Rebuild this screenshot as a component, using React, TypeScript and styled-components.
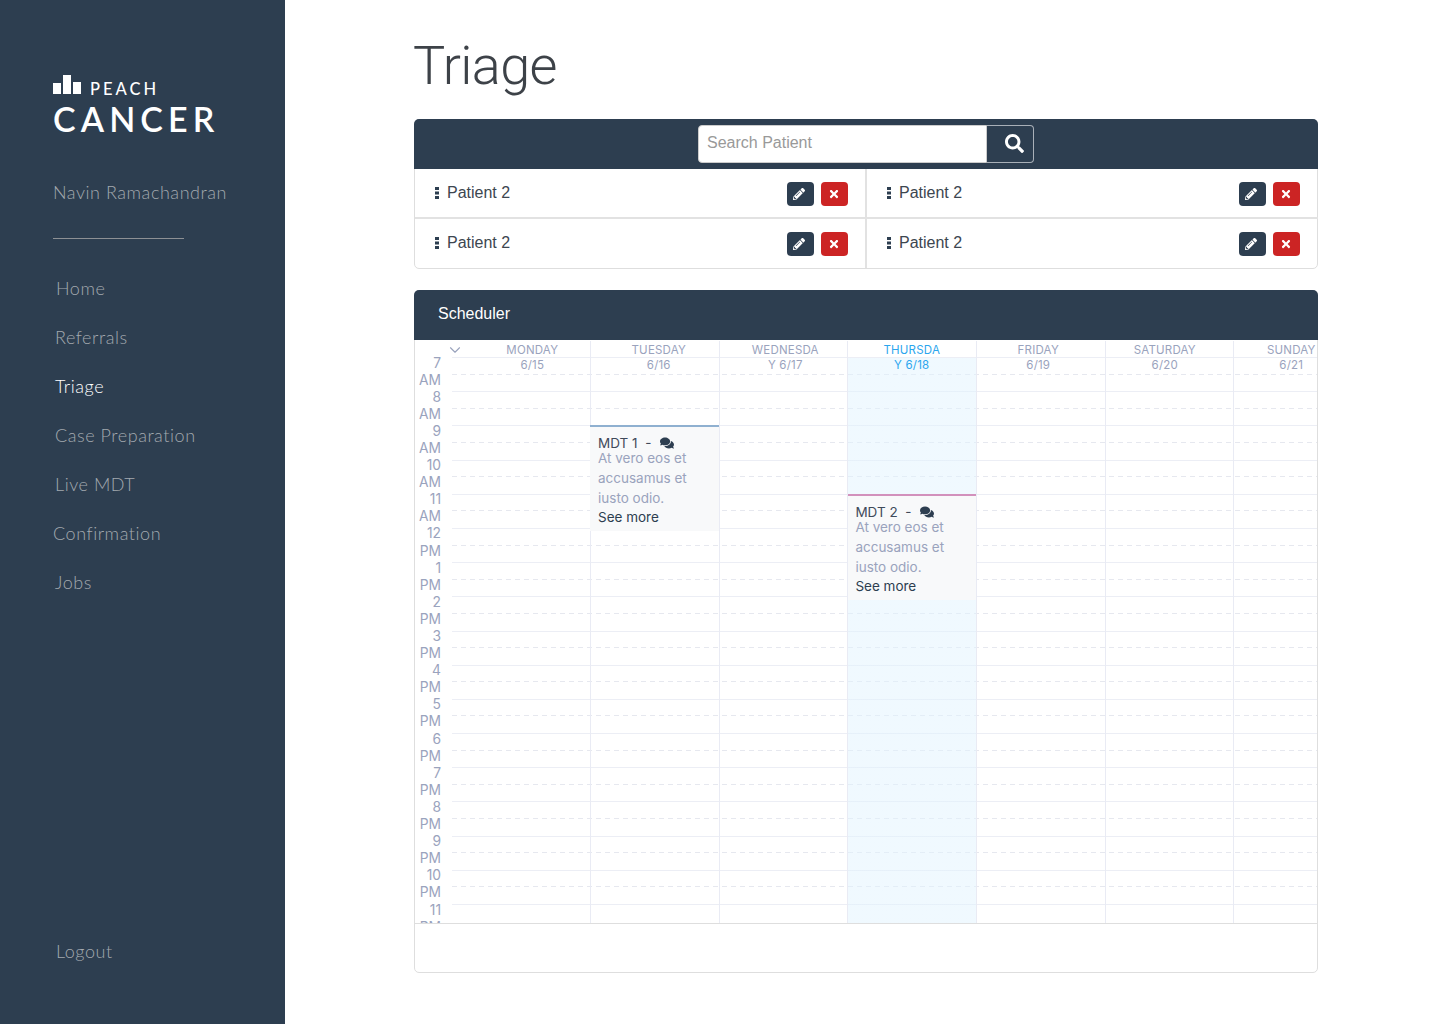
import React from 'react';
import styled, { createGlobalStyle } from 'styled-components';
import { FaSearch, FaPencilAlt, FaTimes, FaComments } from 'react-icons/fa';
import { FiChevronDown } from 'react-icons/fi';

const navy = '#2d3e50';
const HOUR = 34.2;

const GlobalStyle = createGlobalStyle`
  * { box-sizing: border-box; }
  html, body { margin: 0; padding: 0; background: #fff; }
  body { font-family: "Liberation Sans", Arial, sans-serif; color: #3c4650; }
`;

const Page = styled.div`
  display: flex;
  height: 1024px;
  overflow: hidden;
`;

const Sidebar = styled.aside`
  flex: 0 0 285px;
  display: flex;
  flex-direction: column;
  padding: 75px 0 48px 53px;
  background: ${navy};
  font-family: Lato, sans-serif;
`;

const LogoTop = styled.div`
  display: flex;
  align-items: flex-end;
  height: 20px;
`;

const LogoMark = styled.svg`
  width: 28px;
  height: 20px;
  display: block;
`;

const LogoPeach = styled.span`
  margin-left: 9px;
  color: #fff;
  font-size: 16.5px;
  line-height: 12px;
  font-weight: 500;
  letter-spacing: 3px;
`;

const LogoCancer = styled.div`
  margin-top: 5px;
  color: #fff;
  font-size: 34px;
  line-height: 38px;
  font-weight: 600;
  letter-spacing: 5.1px;
`;

const UserName = styled.div`
  margin-top: 42px;
  color: #a3a9af;
  font-size: 18px;
  line-height: 24px;
  font-weight: 300;
  letter-spacing: 0.55px;
`;

const Divider = styled.hr`
  width: 131px;
  height: 1px;
  margin: 34px 0 25px;
  border: 0;
  background: #8d9094;
`;

const Nav = styled.nav`
  display: flex;
  flex-direction: column;
`;

const NavItem = styled.a<{ $active?: boolean; $nudge?: number }>`
  height: 49px;
  padding-left: ${(p) => p.$nudge ?? 2}px;
  color: ${(p) => (p.$active ? '#fff' : '#a3a9af')};
  font-size: 18px;
  line-height: 49px;
  font-weight: 300;
  letter-spacing: 0.55px;
`;

const Logout = styled(NavItem)`
  margin-top: auto;
`;

const Main = styled.main`
  flex: 0 0 1155px;
  padding: 0 122px 0 129px;
`;

const Title = styled.h1`
  margin: 0 0 0 -1px;
  height: 119px;
  padding-top: 31px;
  color: #3d4248;
  font-family: Roboto, sans-serif;
  font-size: 54px;
  line-height: 70px;
  font-weight: 300;
  letter-spacing: -0.6px;
`;

const Panel = styled.section<{ $gap?: number }>`
  margin-top: ${(p) => p.$gap ?? 0}px;
  border: 1px solid #dedede;
  border-radius: 5px;
`;

const PanelHead = styled.header`
  height: 50px;
  margin: -1px -1px 0;
  border-radius: 5px 5px 0 0;
  background: ${navy};
  color: #fff;
  font-size: 16px;
`;

const SearchHead = styled(PanelHead)`
  display: flex;
  justify-content: center;
  padding: 6px 0;
`;

const SchedulerHead = styled(PanelHead)`
  padding: 14px 24px;
  line-height: 20px;
`;

const SearchInput = styled.input`
  width: 289px;
  height: 38px;
  padding: 0 8px 2px;
  border: 1px solid #ccc;
  border-radius: 4px 0 0 4px;
  background: #fff;
  font: 16px "Liberation Sans", Arial, sans-serif;
  outline: none;
  &::placeholder { color: #999; opacity: 1; }
`;

const SearchButton = styled.button`
  display: flex;
  align-items: center;
  justify-content: center;
  width: 47px;
  height: 38px;
  padding: 0 0 2px 9px;
  border: 1px solid #a9b0b8;
  border-left: 0;
  border-radius: 0 4px 4px 0;
  background: ${navy};
  color: #fff;
  font-size: 19px;
`;

const PatientGrid = styled.div`
  display: grid;
  grid-template-columns: 452px 451px;
  grid-template-rows: 50px 49px;
  margin-right: -1px;
`;

const PatientCell = styled.div<{ $lastRow?: boolean; $left?: boolean }>`
  display: flex;
  align-items: center;
  padding: 0 ${(p) => (p.$left ? 17 : 18)}px 0 20px;
  ${(p) => (p.$lastRow ? '' : 'border-bottom: 2px solid #e2e2e2;')}
  ${(p) => (p.$left ? 'border-right: 2px solid #e2e2e2;' : '')}
`;

const DragHandle = styled.svg`
  flex: none;
  width: 4px;
  height: 12px;
  margin: -1px 8px 0 0;
  fill: ${navy};
`;

const PatientName = styled.span<{ $lastRow?: boolean }>`
  flex: 1;
  font-size: 16px;
  line-height: 20px;
  position: relative;
  top: ${(p) => (p.$lastRow ? -1 : 0)}px;
`;

const IconButton = styled.button<{ $danger?: boolean; $lastRow?: boolean }>`
  display: flex;
  align-items: center;
  justify-content: center;
  width: 27px;
  height: 24px;
  margin: ${(p) => (p.$lastRow ? 1 : 2)}px 0 0 7px;
  padding: 0 ${(p) => (p.$danger ? 2 : 3)}px 1px 0;
  border: 0;
  border-radius: 4px;
  background: ${(p) => (p.$danger ? '#cc2424' : navy)};
  color: #fff;
  font-size: 12px;
`;

const Calendar = styled.div`
  display: flex;
  height: 583px;
  margin-top: 1px;
  overflow: hidden;
  border-bottom: 1px solid #dedede;
  font-family: Inter, sans-serif;
`;

const TimeColumn = styled.div`
  flex: 0 0 37px;
  padding: 13.5px 11px 0 0;
`;

const TimeLabel = styled.div`
  height: ${HOUR}px;
  color: #9aa3bd;
  font-size: 13.8px;
  line-height: ${HOUR / 2}px;
  text-align: right;
`;

const GridArea = styled.div`
  position: relative;
  flex: 1;
  min-width: 0;
  padding-top: 16px;
`;

const HourRow = styled.div`
  height: ${HOUR}px;
  border-top: 1px solid #eceef5;
`;

const HalfLine = styled.div`
  height: ${HOUR / 2 - 0.5}px;
  background: repeating-linear-gradient(90deg, #e6e8ef 0 5px, transparent 5px 9px) left bottom / 100% 1px no-repeat;
`;

const ColumnLayer = styled.div`
  position: absolute;
  inset: 0;
  display: flex;
`;

const DayColumn = styled.div<{ $today?: boolean; $first?: boolean; $last?: boolean }>`
  position: relative;
  flex: ${(p) => (p.$last ? '1' : p.$first ? '0 0 138px' : '0 0 128.7px')};
  ${(p) => (p.$first ? '' : 'border-left: 1px solid #e9ebf4;')}
  ${(p) => (p.$today ? 'background: linear-gradient(transparent 17px, rgba(225, 243, 254, 0.5) 17px);' : '')}
`;

const EventCard = styled.div<{ $color: string; $top: number }>`
  position: absolute;
  top: ${(p) => p.$top}px;
  left: -0.6px;
  right: -1px;
  height: 106px;
  padding: 8px 8px 0 7.6px;
  border-top: 2px solid ${(p) => p.$color};
  background: #f8f9fa;
  font-size: 13.5px;
`;

const EventTitle = styled.div`
  display: flex;
  align-items: center;
  height: 13px;
  margin-top: 1px;
  color: #3f4a5a;
`;

const EventIcon = styled.span`
  display: flex;
  margin-left: 5px;
  color: ${navy};
  font-size: 14px;
`;

const EventBody = styled.div`
  margin-top: -1px;
  color: #9aa3bd;
  line-height: 20px;
`;

const SeeMore = styled.div`
  color: ${navy};
  line-height: 18px;
`;

const HeaderRow = styled.div`
  position: absolute;
  top: 0;
  left: -3px;
  right: 0;
  display: flex;
  overflow: hidden;
  padding-top: 1.5px;
`;

const Chevron = styled.span`
  flex: 0 0 20px;
  display: flex;
  height: 15px;
  color: #9aa3bd;
  font-size: 18px;
  svg { flex: none; margin: -2px 0 0 -3px; stroke-width: 1.5; }
`;

const DayHead = styled.div<{ $today?: boolean }>`
  flex: 0 0 126.5px;
  display: flex;
  justify-content: center;
  color: ${(p) => (p.$today ? '#2ba6ee' : '#9aa3bd')};
  font-size: 11.5px;
  line-height: 15px;
  letter-spacing: 0.2px;
  text-align: center;
  text-transform: uppercase;
`;

const DayHeadText = styled.div<{ $narrow?: boolean }>`
  width: ${(p) => (p.$narrow ? 60 : 67.5)}px;
  overflow-wrap: anywhere;
`;

const PanelFoot = styled.div`
  height: 48px;
`;

const navItems = ['Home', 'Referrals', 'Triage', 'Case Preparation', 'Live MDT', 'Confirmation', 'Jobs'];
const nudges: Record<string, number> = { Home: 3, Confirmation: 0 };
const hours = ['7 AM', '8 AM', '9 AM', '10 AM', '11 AM', '12 PM', '1 PM', '2 PM', '3 PM', '4 PM', '5 PM', '6 PM', '7 PM', '8 PM', '9 PM', '10 PM', '11 PM'];
const days = [
  { name: 'Monday', date: '6/15' },
  { name: 'Tuesday', date: '6/16' },
  { name: 'Wednesday', date: '6/17' },
  { name: 'Thursday', date: '6/18', today: true },
  { name: 'Friday', date: '6/19' },
  { name: 'Saturday', date: '6/20' },
  { name: 'Sunday', date: '6/21' },
];
const events: Record<string, { title: string; color: string; top: number }> = {
  Tuesday: { title: 'MDT 1', color: '#8fb0d0', top: 84 },
  Thursday: { title: 'MDT 2', color: '#d291bc', top: 153 },
};

export default function App() {
  return (
    <Page>
      <GlobalStyle />
      <Sidebar>
        <LogoTop>
          <LogoMark viewBox="0 0 28 20">
            <rect x="0" y="8" width="8" height="11" fill="#fff" />
            <rect x="10" y="0" width="8" height="19" fill="#fff" />
            <rect x="20" y="7" width="8" height="12" fill="#fff" />
          </LogoMark>
          <LogoPeach>PEACH</LogoPeach>
        </LogoTop>
        <LogoCancer>CANCER</LogoCancer>
        <UserName>Navin Ramachandran</UserName>
        <Divider />
        <Nav>
          {navItems.map((item) => (
            <NavItem key={item} $active={item === 'Triage'} $nudge={nudges[item]}>
              {item}
            </NavItem>
          ))}
        </Nav>
        <Logout $nudge={3}>Logout</Logout>
      </Sidebar>
      <Main>
        <Title>Triage</Title>
        <Panel>
          <SearchHead>
            <SearchInput placeholder="Search Patient" />
            <SearchButton><FaSearch /></SearchButton>
          </SearchHead>
          <PatientGrid>
            {[0, 1, 2, 3].map((i) => (
              <PatientCell key={i} $left={i % 2 === 0} $lastRow={i > 1}>
                <DragHandle viewBox="0 0 4 12">
                  <rect y="0" width="4" height="3" />
                  <rect y="4.5" width="4" height="3" />
                  <rect y="9" width="4" height="3" />
                </DragHandle>
                <PatientName $lastRow={i > 1}>Patient 2</PatientName>
                <IconButton $lastRow={i > 1}><FaPencilAlt /></IconButton>
                <IconButton $lastRow={i > 1} $danger><FaTimes /></IconButton>
              </PatientCell>
            ))}
          </PatientGrid>
        </Panel>
        <Panel $gap={21}>
          <SchedulerHead>Scheduler</SchedulerHead>
          <Calendar>
            <TimeColumn>
              {hours.map((h) => (
                <TimeLabel key={h}>{h}</TimeLabel>
              ))}
            </TimeColumn>
            <GridArea>
              {hours.map((h, i) => (
                <HourRow key={h}>{i < hours.length - 1 && <HalfLine />}</HourRow>
              ))}
              <ColumnLayer>
                {days.map((d, i) => {
                  const ev = events[d.name];
                  return (
                    <DayColumn key={d.name} $today={d.today} $first={i === 0} $last={i === days.length - 1}>
                      {ev && (
                        <EventCard $color={ev.color} $top={ev.top}>
                          <EventTitle>
                            {ev.title}&nbsp;&nbsp;-&nbsp;
                            <EventIcon><FaComments /></EventIcon>
                          </EventTitle>
                          <EventBody>At vero eos et accusamus et iusto odio.</EventBody>
                          <SeeMore>See more</SeeMore>
                        </EventCard>
                      )}
                    </DayColumn>
                  );
                })}
              </ColumnLayer>
              <HeaderRow>
                <Chevron><FiChevronDown /></Chevron>
                {days.map((d) => (
                  <DayHead key={d.name} $today={d.today}>
                    <DayHeadText $narrow={d.today}>{d.name} {d.date}</DayHeadText>
                  </DayHead>
                ))}
              </HeaderRow>
            </GridArea>
          </Calendar>
          <PanelFoot />
        </Panel>
      </Main>
    </Page>
  );
}
